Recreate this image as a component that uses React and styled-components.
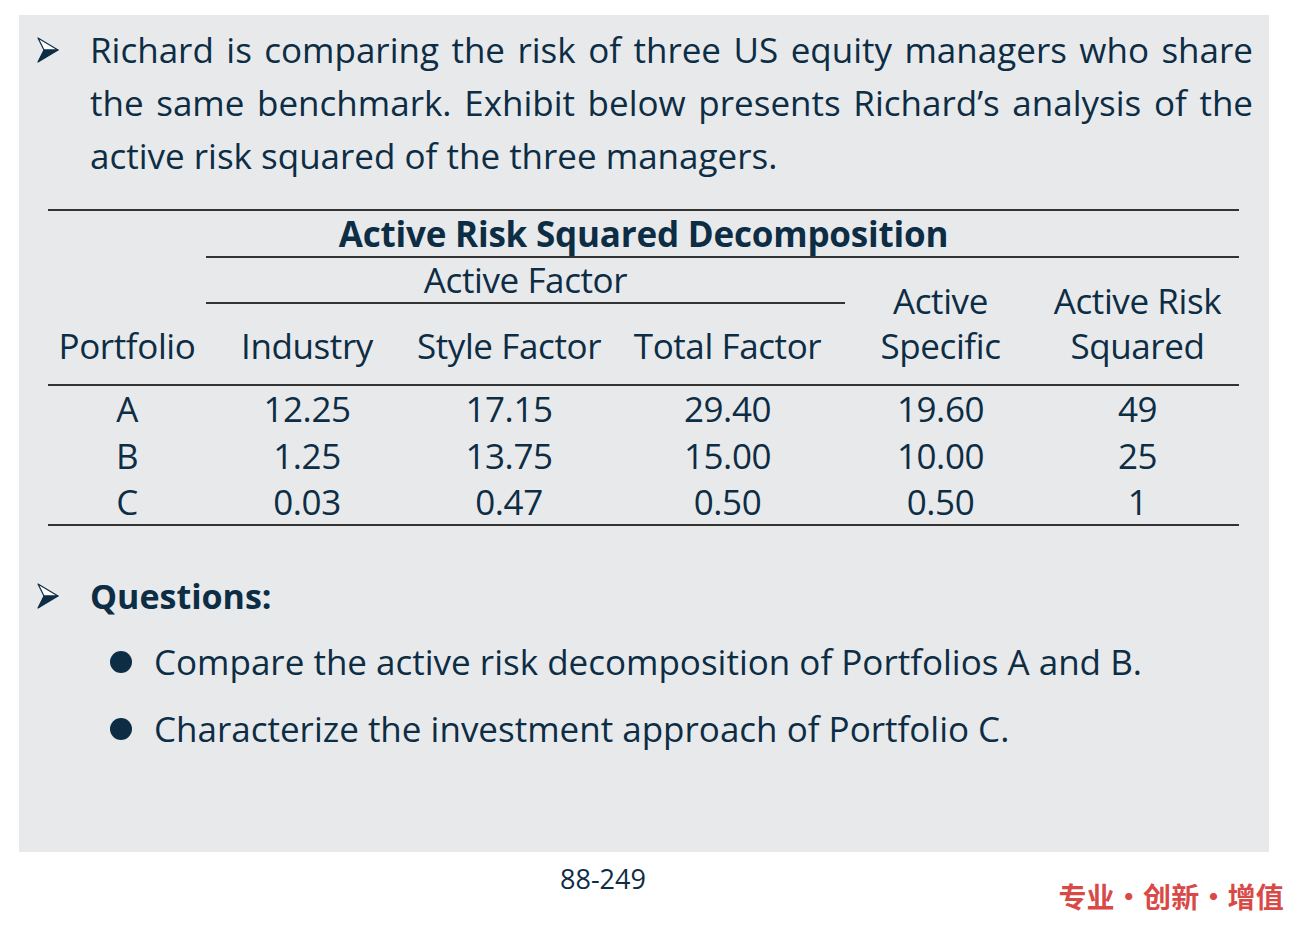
import React from "react"
import styled, { createGlobalStyle } from "styled-components"

const GlobalStyle = createGlobalStyle`
  body {
    margin: 0;
    background: #ffffff;
    font-family: "Open Sans", "Noto Sans", sans-serif;
    color: #0d2d45;
  }
`

const Page = styled.div`
  width: 1306px;
  height: 930px;
  padding: 15px 0 0 19px;
  box-sizing: border-box;
`

const Panel = styled.div`
  width: 1250px;
  height: 837px;
  background: #e8e9eb;
  box-sizing: border-box;
  padding: 8px 16px 0 17px;
`

const Point = styled.div`
  display: flex;
  align-items: flex-start;
  gap: 31px;
  padding-left: 1px;
`

const ArrowBox = styled.div`
  flex: none;
  width: 22px;
  padding-top: ${p => p.$top || 0}px;
`

const Intro = styled.p`
  margin: 0;
  font-size: 35px;
  line-height: 53px;
  text-align: justify;
  flex: 1;
`

const Heading = styled.div`
  font-size: 34px;
  font-weight: 700;
  line-height: 50px;
`

const Table = styled.table`
  border-collapse: collapse;
  margin: 27px 0 0 12px;
  width: 1191px;
  font-size: 35px;
  letter-spacing: -0.4px;
  line-height: 46px;
  td, th {
    padding: 0;
    text-align: center;
    font-weight: 400;
    white-space: nowrap;
  }
`

const TopRow = styled.tr`
  border-top: 2px solid #333;
`

const Title = styled.th`
  && {
    font-weight: 700;
    padding-right: 158px;
  }
  letter-spacing: -0.2px;
  border-bottom: 2px solid #333;
  line-height: 45px;
`

const GroupCell = styled.th`
  border-bottom: 2px solid #333;
  line-height: 44px;
`

const SpanCell = styled.th`
  vertical-align: bottom;
  line-height: 45px;
  && {
    padding-bottom: 16px;
  }
`

const HeadRow = styled.tr`
  border-bottom: 2px solid #333;
  th {
    height: 76px;
    vertical-align: middle;
  }
  && th {
    padding-top: 4px;
  }
`

const DataRow = styled.tr`
  td {
    line-height: 46.5px;
  }
  &:last-child {
    border-bottom: 2px solid #333;
  }
  &:last-child td {
    line-height: 44px;
    padding-top: 1px;
  }
`

const Questions = styled.div`
  margin-top: 45px;
`

const BulletList = styled.ul`
  list-style: none;
  margin: 17px 0 0 0;
  padding: 0 0 0 74px;
`

const Bullet = styled.li`
  display: flex;
  align-items: center;
  font-size: 35px;
  line-height: 48px;
  margin-bottom: 19px;
  &::before {
    content: "";
    width: 22px;
    height: 22px;
    border-radius: 50%;
    background: #0d2d45;
    margin-right: 22px;
    flex: none;
  }
`

const Footer = styled.div`
  display: flex;
  align-items: flex-start;
`

const PageNo = styled.div`
  font-size: 27px;
  line-height: 30px;
  margin: 12px 0 0 541px;
`

const Slogan = styled.div`
  margin: 27px 0 0 auto;
  padding-right: 22px;
  font-family: "Noto Sans CJK SC", sans-serif;
  font-weight: 700;
  font-size: 28px;
  line-height: 34px;
  color: #d84a48;
  letter-spacing: 0.2px;
`

const Arrow = () => (
  <svg width="22" height="26" viewBox="0 0 22 26">
    <path d="M1 1 L21 13 L7 13 Z" fill="#ffffff" stroke="#0d2d45" strokeWidth="1.2" strokeLinejoin="round" />
    <path d="M7 13 L21 13 L1 25 Z" fill="#0d2d45" stroke="#0d2d45" strokeWidth="1.2" strokeLinejoin="round" />
  </svg>
)

const rows = [
  ["A", "12.25", "17.15", "29.40", "19.60", "49"],
  ["B", "1.25", "13.75", "15.00", "10.00", "25"],
  ["C", "0.03", "0.47", "0.50", "0.50", "1"],
]

export default function App() {
  return (
    <Page>
      <GlobalStyle />
      <Panel>
        <Point>
          <ArrowBox $top={14}>
            <Arrow />
          </ArrowBox>
          <Intro>
            Richard is comparing the risk of three US equity managers who share
            the same benchmark. Exhibit below presents Richard’s analysis of the
            active risk squared of the three managers.
          </Intro>
        </Point>

        <Table>
          <colgroup>
            <col style={{ width: 158 }} />
            <col style={{ width: 202 }} />
            <col style={{ width: 202 }} />
            <col style={{ width: 235 }} />
            <col style={{ width: 191 }} />
            <col style={{ width: 203 }} />
          </colgroup>
          <thead>
            <TopRow>
              <th />
              <Title colSpan={5}>Active Risk Squared Decomposition</Title>
            </TopRow>
            <tr>
              <th />
              <GroupCell colSpan={3}>Active Factor</GroupCell>
              <SpanCell rowSpan={2}>Active<br />Specific</SpanCell>
              <SpanCell rowSpan={2}>Active Risk<br />Squared</SpanCell>
            </tr>
            <HeadRow>
              <th>Portfolio</th>
              <th>Industry</th>
              <th>Style Factor</th>
              <th>Total Factor</th>
            </HeadRow>
          </thead>
          <tbody>
            {rows.map(r => (
              <DataRow key={r[0]}>
                {r.map((v, i) => (
                  <td key={i}>{v}</td>
                ))}
              </DataRow>
            ))}
          </tbody>
        </Table>

        <Questions>
          <Point>
            <ArrowBox $top={12}>
              <Arrow />
            </ArrowBox>
            <Heading>Questions:</Heading>
          </Point>
          <BulletList>
            <Bullet>Compare the active risk decomposition of Portfolios A and B.</Bullet>
            <Bullet>Characterize the investment approach of Portfolio C.</Bullet>
          </BulletList>
        </Questions>
      </Panel>
      <Footer>
        <PageNo>88-249</PageNo>
        <Slogan>专业·创新·增值</Slogan>
      </Footer>
    </Page>
  )
}
